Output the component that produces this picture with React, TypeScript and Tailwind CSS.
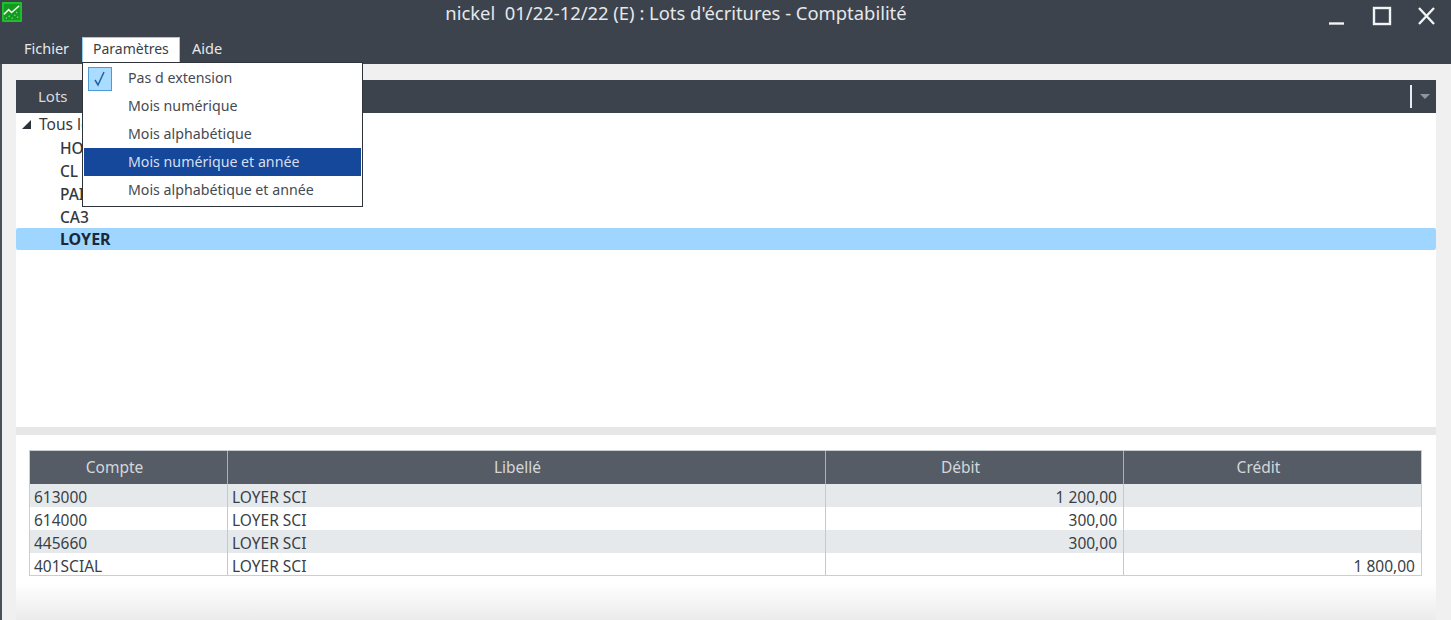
const menuItems = [
  { text: "Pas d extension", checked: true },
  { text: "Mois numérique" },
  { text: "Mois alphabétique" },
  { text: "Mois numérique et année", active: true },
  { text: "Mois alphabétique et année" },
]

const treeItems = ["HONORAIRES", "CL SCI", "PAIE", "CA3"]

interface Row {
  compte: string
  debit: string
  credit: string
}

const rows: Row[] = [
  { compte: "613000", debit: "1 200,00", credit: "" },
  { compte: "614000", debit: "300,00", credit: "" },
  { compte: "445660", debit: "300,00", credit: "" },
  { compte: "401SCIAL", debit: "", credit: "1 800,00" },
]

const App = () => {
  return (
    <div className="relative h-[620px] w-[1451px] overflow-hidden bg-[#f0f0f0] font-['Noto_Sans','Open_Sans',sans-serif] text-[#3a3f47]">
      {/* Title bar */}
      <header className="h-[64px] bg-[#3c434d] text-[#e6e8ea]">
        <div className="relative flex h-[37px] items-start">
          <svg width="20" height="20" viewBox="0 0 21 21" className="ml-[2px] mt-[2px] shrink-0">
            <rect width="21" height="21" rx="1" fill="#1fc12c" />
            <rect x="2" y="2" width="17" height="17" fill="#149a20" />
            <path d="M2 13l5-5 3 3 8-7" fill="none" stroke="#e8fbe8" strokeWidth="1.6" />
            <path d="M4 17h1M7 15h1M10 17h1M13 14h1M16 16h1M15 11h1" stroke="#a5eca8" strokeWidth="1.4" />
          </svg>
          <div className="absolute left-0 top-[2px] w-[1352px] text-center text-[18.4px] leading-[22px] whitespace-pre">
            nickel  01/22-12/22 (E) : Lots d'écritures - Comptabilité
          </div>
          <div className="ml-auto flex items-start">
            <svg width="124" height="37" viewBox="0 0 124 37" fill="none" stroke="#f2f3f4" strokeWidth="2.4">
              <path d="M2 23.5h15" />
              <rect x="47" y="8" width="16" height="16" />
              <path d="M92 8l15 16M107 8L92 24" />
            </svg>
          </div>
        </div>
        <nav className="flex h-[27px] items-start text-[14px]">
          <div className="ml-[24px] mt-[1px] w-[58px] text-[14.5px] leading-[20px]">Fichier</div>
          <div className="h-[27px] w-[98px] border-x border-t border-[#8fd0ee] bg-white pl-[10px] pt-[1px] leading-[20px] text-[#3a3f47]">
            Paramètres
          </div>
          <div className="ml-[12px] mt-[1px] text-[14.5px] leading-[20px]">Aide</div>
        </nav>
      </header>

      {/* Dropdown */}
      <div className="absolute left-[82px] top-[62px] z-10 h-[145px] w-[281px] border border-[#2f343a] bg-white p-[1px] text-[14.2px]">
        {menuItems.map((item) => (
          <div
            key={item.text}
            className={
              item.active
                ? "relative flex h-[28px] items-center bg-[#15479b] pb-[1px] pl-[44px] text-[#d5dfee]"
                : "relative flex h-[28px] items-center pb-[1px] pl-[44px] text-[#444a52]"
            }
          >
            {item.checked && (
              <span className="absolute left-[4px] top-[3px] flex h-[24px] w-[24px] items-center justify-center border border-[#4a9bd8] bg-[#a9dcff]">
                <svg width="14" height="16" viewBox="0 0 14 16" fill="none" stroke="#1f5fa8" strokeWidth="1.5">
                  <path d="M2 9l3 5 6-13" />
                </svg>
              </span>
            )}
            {item.text}
          </div>
        ))}
      </div>

      <div className="flex h-[556px] flex-col border-l-[2px] border-[#4a515b] pl-[14px] pr-[15px]">
        {/* Lots panel */}
        <section className="mt-[16px] flex h-[347px] flex-col bg-white">
          <div className="flex h-[33px] shrink-0 items-center justify-between bg-[#3c434d] pl-[22px] text-[15px] text-[#d8dbde]">
            Lots
            <div className="flex items-center">
              <span className="h-[23px] w-[2px] bg-[#e8ecf0]" />
              <span className="ml-[8px] mr-[6px] h-0 w-0 border-x-[5px] border-t-[5px] border-x-transparent border-t-[#8f959c]" />
            </div>
          </div>
          <div className="text-[15.5px] font-medium text-[#33383f]">
            <div className="flex h-[23px] items-center pl-[6px] font-normal">
              <span className="mr-[8px] h-0 w-0 border-b-[9px] border-l-[9px] border-b-[#2d3238] border-l-transparent" />
              Tous les lots
            </div>
            {treeItems.map((item) => (
              <div key={item} className="flex h-[23px] items-center pl-[44px] pt-[2px]">
                {item}
              </div>
            ))}
            <div className="flex h-[22px] items-center rounded-[2px] bg-[#9fd6ff] pl-[44px] text-[16px] font-bold text-[#1c2836]">
              LOYER
            </div>
          </div>
        </section>

        <div className="h-[8px] shrink-0 bg-[#e7e7e7]" />

        {/* Ecritures table */}
        <section className="flex flex-1 flex-col bg-gradient-to-b from-white from-[80%] to-[#ebebeb] pl-[13px] pr-[14px] pt-[15px]">
          <div className="border border-[#c9ced3] text-[15.5px]">
            <div className="grid h-[33px] grid-cols-[198px_598px_298px_1fr] bg-[#555c66] text-center leading-[33px] text-[#d4d7da]">
              <div className="border-r border-[#aab0b6] pr-[28px]">Compte</div>
              <div className="border-r border-[#aab0b6] pr-[18px]">Libellé</div>
              <div className="border-r border-[#aab0b6] pr-[28px]">Débit</div>
              <div className="pr-[28px]">Crédit</div>
            </div>
            {rows.map((row, index) => (
              <div
                key={row.compte}
                className={
                  index % 2 === 0
                    ? "grid h-[23px] grid-cols-[198px_598px_298px_1fr] bg-[#e6e9ec] leading-[18px]"
                    : "grid h-[23px] grid-cols-[198px_598px_298px_1fr] bg-white leading-[18px] last:h-[22px]"
                }
              >
                <div className="border-r border-[#c4c9ce] pl-[4px] pt-[4px]">{row.compte}</div>
                <div className="border-r border-[#c4c9ce] pl-[4px] pt-[4px]">LOYER SCI</div>
                <div className="border-r border-[#c4c9ce] pr-[6px] pt-[4px] text-right">{row.debit}</div>
                <div className="pr-[6px] pt-[4px] text-right">{row.credit}</div>
              </div>
            ))}
          </div>
        </section>
      </div>
    </div>
  )
}

export default App
